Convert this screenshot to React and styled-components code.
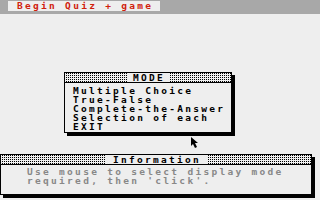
import React from 'react';
import styled, {createGlobalStyle} from 'styled-components';

const GlobalStyle = createGlobalStyle`
  html, body {
    margin: 0;
    padding: 0;
    background: #eeeeee;
  }
  body {
    font-family: "DejaVu Sans Mono", "Liberation Mono", monospace;
    font-weight: bold;
    font-size: 9.5px;
    letter-spacing: 2.3px;
    -webkit-font-smoothing: none;
  }
`;

const Screen = styled.div`
  position: relative;
  width: 320px;
  height: 200px;
  overflow: hidden;
  background: #eeeeee;
`;

const MenuBar = styled.div`
  height: 14px;
  background: #a8a8a8;
  padding: 1px 0 0 8px;
  box-sizing: border-box;
`;

const MenuTitle = styled.div`
  width: 152px;
  height: 10px;
  background: #eeeeee;
  color: #d0200c;
  line-height: 10px;
  padding-left: 9px;
  box-sizing: border-box;
  white-space: nowrap;
`;

const Dialog = styled.div`
  box-sizing: border-box;
  width: ${p => p.w}px;
  height: ${p => p.h}px;
  margin: ${p => p.mt}px 0 0 ${p => p.ml}px;
  border: 1px solid #000;
  background: #eeeeee;
  box-shadow: 3px 3px 0 #000;
  display: flex;
  flex-direction: column;
`;

const TitleBar = styled.div`
  height: 9px;
  border-bottom: 1px solid #000;
  background-color: #eeeeee;
  background-image: repeating-conic-gradient(#000 0 25%, transparent 0 100%);
  background-size: 2px 2px;
  display: flex;
  justify-content: center;
  align-items: center;
  flex-shrink: 0;
`;

const TitleText = styled.span`
  background: #eeeeee;
  color: #000;
  padding: 0 ${p => p.pad}px 0 ${p => p.pad + 2}px;
  line-height: 9px;
  height: 9px;
`;

const Body = styled.div`
  padding: ${p => p.pt}px 0 0 ${p => p.pl}px;
  color: ${p => p.color};
  line-height: 9px;
  white-space: pre;
`;

const Item = styled.div`
  height: ${p => p.h || 9}px;
`;

const Cursor = styled.svg`
  position: absolute;
  left: 191px;
  top: 137px;
`;

const modes = ['Multiple Choice', 'True-False', 'Complete-the-Answer', 'Selection of each', 'EXIT'];

export default function App() {
    return (
        <Screen>
            <GlobalStyle />
            <MenuBar>
                <MenuTitle>Begin Quiz + game</MenuTitle>
            </MenuBar>
            <Dialog w={168} h={61} mt={58} ml={64}>
                <TitleBar>
                    <TitleText pad={4}>MODE</TitleText>
                </TitleBar>
                <Body pt={3} pl={8} color="#000">
                    {modes.map(m => <Item key={m}>{m}</Item>)}
                </Body>
            </Dialog>
            <Dialog w={312} h={41} mt={21} ml={0}>
                <TitleBar>
                    <TitleText pad={6}>Information</TitleText>
                </TitleBar>
                <Body pt={2} pl={26} color="#888888">
                    <Item>Use mouse to select display mode</Item>
                    <Item>required, then 'click'.</Item>
                </Body>
            </Dialog>
            <Cursor width="10" height="12" viewBox="0 0 10 12">
                <path d="M0 0 L0 9 L2 7 L4 11 L6 10 L4 6 L7 6 Z" fill="#000" />
            </Cursor>
        </Screen>
    );
}
